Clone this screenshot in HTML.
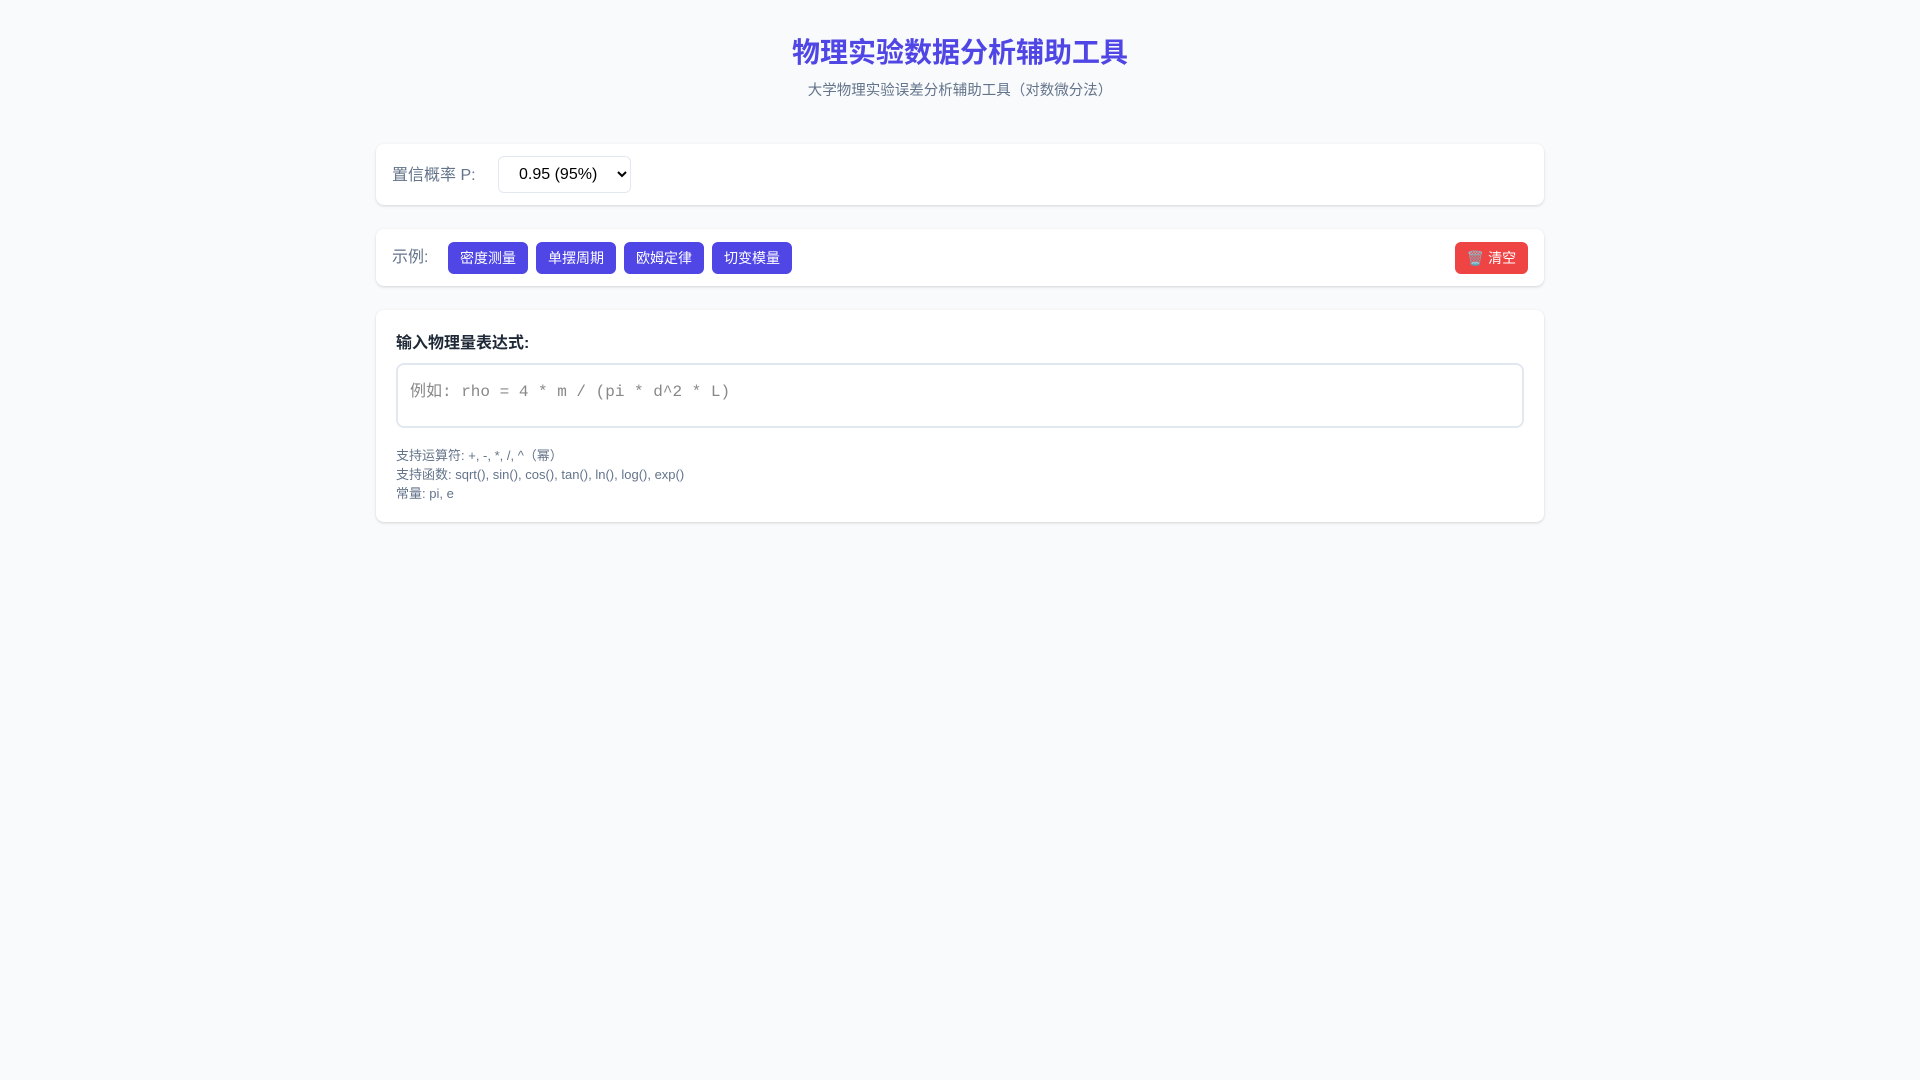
<!DOCTYPE html>
<html><head><meta charset="utf-8"><style>
*{box-sizing:border-box;margin:0;padding:0}
body{background:#f8fafc;font-family:"Liberation Sans","Noto Sans CJK SC",sans-serif;width:1920px;height:1080px;overflow:hidden}
h1{position:absolute;top:34px;left:0;width:1920px;text-align:center;font-size:28px;color:#4f46e5;font-weight:700;line-height:38px}
.sub{position:absolute;top:81px;left:0;width:1920px;text-align:center;font-size:14.5px;color:#64748b;line-height:20px}
.card{position:absolute;left:376px;width:1168px;background:#fff;border-radius:8px;box-shadow:0 1px 3px rgba(0,0,0,.1),0 1px 2px rgba(0,0,0,.06)}
.lbl{position:absolute;left:16px;color:#64748b;font-size:16px}
select{position:absolute;left:122px;top:12px;width:133px;height:37px;border:1px solid #e2e8f0;border-radius:6px;background:#fff;font-size:16px;padding:0 16px;font-family:"Liberation Sans",sans-serif;color:#000}
.btn{position:absolute;top:13px;height:32px;width:80px;background:#4f46e5;color:#fff;border-radius:6px;font-size:14px;line-height:32px;text-align:center}
.red{background:#ef4444;width:73px}
.ta{position:absolute;left:20px;top:53px;width:1128px;height:65px;border:2px solid #e2e8f0;border-radius:8px;padding:17px 12px 12px;font-family:"Liberation Mono","Noto Sans CJK SC",monospace;font-size:16px;color:#888;line-height:20px}
.help{position:absolute;left:20px;top:136px;font-size:13px;color:#64748b;line-height:19px}
</style></head><body>
<h1>物理实验数据分析辅助工具</h1>
<div class="sub">大学物理实验误差分析辅助工具（对数微分法）</div>
<div class="card" style="top:144px;height:61px">
<div class="lbl" style="top:17px">置信概率 P:</div>
<select><option>0.95 (95%)</option></select>
</div>
<div class="card" style="top:229px;height:57px">
<div class="lbl" style="top:14px">示例:</div>
<div class="btn" style="left:72px">密度测量</div>
<div class="btn" style="left:160px">单摆周期</div>
<div class="btn" style="left:248px">欧姆定律</div>
<div class="btn" style="left:336px">切变模量</div>
<div class="btn red" style="left:1079px">🗑️ 清空</div>
</div>
<div class="card" style="top:310px;height:212px">
<div style="position:absolute;left:20px;top:19px;font-size:16px;font-weight:700;color:#1f2937">输入物理量表达式:</div>
<div class="ta">例如: rho = 4 * m / (pi * d^2 * L)</div>
<div class="help">支持运算符: +, -, *, /, ^（幂）<br>支持函数: sqrt(), sin(), cos(), tan(), ln(), log(), exp()<br>常量: pi, e</div>
</div>
</body></html>
